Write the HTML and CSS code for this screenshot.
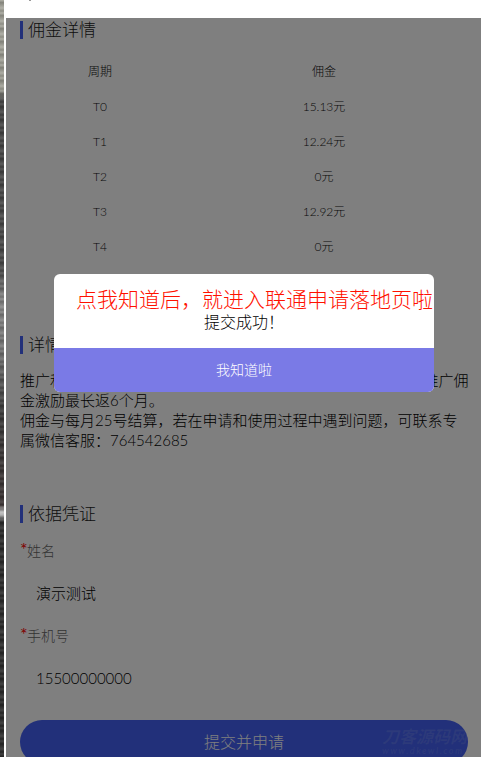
FILE: index.html
```html
<!DOCTYPE html>
<html lang="en">
<head>
    <meta charset="UTF-8">
    <title>佣金详情</title>
    <meta name="viewport" content="width=device-width, initial-scale=1.0">
    <link rel="stylesheet" href="styles.css">
</head>
<body>
<div class="strip"></div>
<div class="page">
    <div class="top"><span class="top-mark"></span></div>
    <h3 class="title first">佣金详情</h3>
    <div class="table">
        <p>周期</p><p>佣金</p>
        <p>T0</p><p>15.13元</p>
        <p>T1</p><p>12.24元</p>
        <p>T2</p><p>0元</p>
        <p>T3</p><p>12.92元</p>
        <p>T4</p><p>0元</p>
    </div>
    <h3 class="title detail">详情说明</h3>
    <p class="desc">推广和办理联通卡成功后，将按以上周期发放的T0至T4共5期推广佣<br>金激励最长返6个月。<br>佣金与每月25号结算，若在申请和使用过程中遇到问题，可联系专属微信客服：764542685</p>
    <h3 class="title proof">依据凭证</h3>
    <p class="label"><span class="star">*</span>姓名</p>
    <p class="value">演示测试</p>
    <p class="label"><span class="star">*</span>手机号</p>
    <p class="value">15500000000</p>
    <div class="submit">提交并申请</div>
    <div class="overlay">
        <div class="modal">
            <div class="modal-body">
                <p class="modal-red">点我知道后，就进入联通申请落地页啦</p>
                <p class="modal-msg">提交成功！</p>
            </div>
            <div class="modal-btn">我知道啦</div>
        </div>
    </div>
</div>
<div class="mark">
    <p class="mark-big">刀客源码网</p>
    <p class="mark-small">www.dkewl.com</p>
</div>
</body>
</html>
```
FILE: styles.css
```css
*{margin: 0;padding: 0;box-sizing: border-box;}
html,body{
    overflow: hidden;
    height: 757px;
}
body{
    display: flex;
    background-color: #fff;
    font-family: Lato,"Noto Sans CJK SC",sans-serif;
    font-weight: 300;
}
.strip{
    width: 4px;
    height: 757px;
    background-image:
        repeating-linear-gradient(0deg,rgba(0,0,0,.25) 0,rgba(255,255,255,.1) 3px,rgba(0,0,0,.15) 5px,rgba(255,255,255,.12) 8px,rgba(0,0,0,.2) 13px),
        linear-gradient(#a8a89e 0,#a0a096 90px,#444 100px,#4a4a4a 270px,#8a8a8a 300px,#777 350px,#3a3a3a 410px,#3a3232 505px,#ddd 512px,#2a2a2a 522px,#2a2a2a 757px);
}
.page{
    position: relative;
    overflow: hidden;
    width: 477px;
    height: 757px;
    background-color: #fff;
}
.top{
    height: 18px;
}
.top-mark{
    display: block;
    width: 2px;
    height: 1px;
    margin-left: 25px;
    background-color: #999;
}

.title{
    height: 18px;
    margin-left: 16px;
    padding-left: 5px;
    border-left: 3px solid #4460f4;
    font-size: 17px;
    font-weight: 300;
    line-height: 17px;
    color: #222;
}
.title.first{
    margin-top: 3px;
}
.title.detail{
    margin-top: 72px;
}
.title.proof{
    margin-top: 55px;
}

.table{
    display: grid;
    grid-template-columns: 192px 256px;
    grid-auto-rows: 35px;
    margin-top: 15px;
}
.table p{
    font-size: 12px;
    line-height: 35px;
    text-align: center;
    color: #111;
}

.desc{
    width: 450px;
    margin: 16px 0 0 16px;
    font-size: 15px;
    line-height: 20px;
    color: #000;
}

.label{
    margin: 18px 0 0 16px;
    font-size: 14px;
    line-height: 20px;
    color: #666;
}
.star{
    display: inline-block;
    width: 7px;
    font-size: 18px;
    font-weight: 400;
    line-height: 14px;
    text-align: center;
    color: #f00;
}
.value{
    margin: 17px 0 0 32px;
    height: 48px;
    font-size: 15px;
    line-height: 30px;
    color: #000;
}
.value + .label{
    margin-top: 0;
}

.submit{
    width: 448px;
    height: 44px;
    margin: 9px 0 0 16px;
    border-radius: 22px;
    background-color: #4460f4;
    font-size: 16px;
    line-height: 44px;
    text-align: center;
    color: #fff;
}

.overlay{
    position: absolute;
    top: 18px;
    left: 2px;
    right: 0;
    bottom: 0;
    padding: 256px 0 0 48px;
    background-color: rgba(0,0,0,.5);
}
.modal{
    overflow: hidden;
    width: 380px;
    height: 118px;
    border-radius: 6px;
    background-color: #fff;
}
.modal-body{
    height: 74px;
    padding-top: 11px;
}
.modal-red{
    padding-left: 22px;
    font-size: 21px;
    line-height: 28px;
    white-space: nowrap;
    color: #f10;
}
.modal-msg{
    font-size: 16px;
    line-height: 18px;
    text-align: center;
    color: #000;
}
.modal-btn{
    height: 44px;
    background-color: #7a7ae6;
    font-size: 14px;
    line-height: 44px;
    text-align: center;
    color: #fff;
}

/* watermark in the corner */
.mark{
    position: absolute;
    left: 382px;
    top: 728px;
    font-style: italic;
    font-weight: bold;
    color: rgba(128,128,128,.12);
}
.mark-big{
    font-size: 17px;
    line-height: 18px;
}
.mark-small{
    font-size: 9px;
    line-height: 9px;
    letter-spacing: 1.5px;
}
```
